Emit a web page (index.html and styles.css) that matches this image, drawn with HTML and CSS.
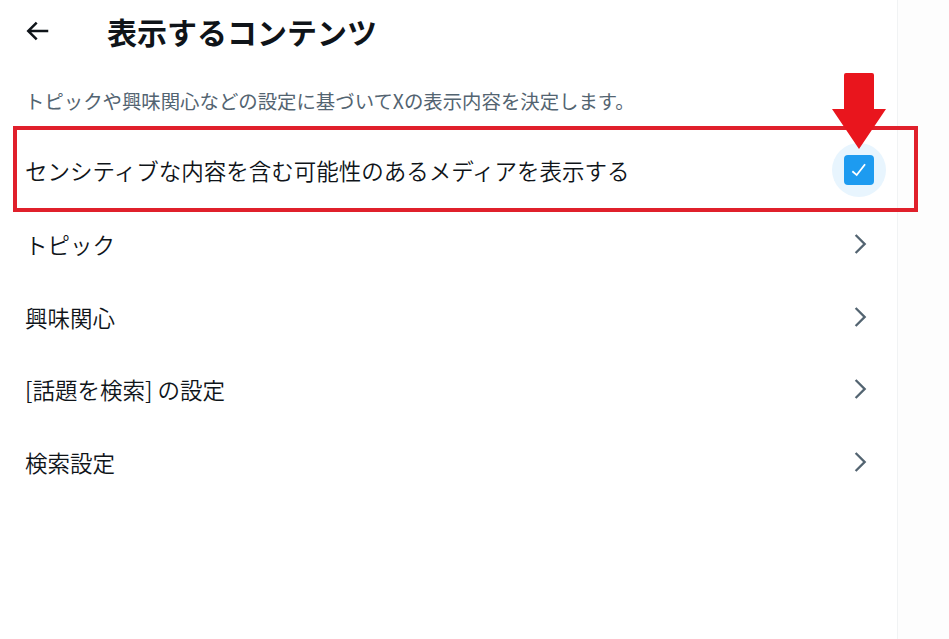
FILE: index.html
```html
<!DOCTYPE html>
<html lang="ja">
<head>
  <meta charset="UTF-8">
  <title>表示するコンテンツ</title>
  <link rel="stylesheet" href="styles.css">
</head>
<body>
  <div class="page">
    <main class="column">
      <header class="header">
        <svg class="back" viewBox="0 0 24 24"><path d="M7.414 13l5.043 5.04-1.414 1.42L3.586 12l7.457-7.46 1.414 1.42L7.414 11H21v2H7.414z"/></svg>
        <h1>表示するコンテンツ</h1>
      </header>
      <p class="desc">トピックや興味関心などの設定に基づいてXの表示内容を決定します。</p>

      <div class="row row-check">
        <span class="label">センシティブな内容を含む可能性のあるメディアを表示する</span>
        <span class="check-wrap">
          <span class="check">
            <svg viewBox="0 0 24 24"><path d="M9.64 18.952l-5.55-4.861 1.317-1.504 3.951 3.459 8.459-10.948L19.4 6.32 9.64 18.952z"/></svg>
          </span>
        </span>
        <span class="mark-box"></span>
        <svg class="mark-arrow" viewBox="0 0 54 77"><path d="M12 2 Q12 0 14 0 H40 Q42 0 42 2 V36 H54 L27 76 L0 36 H12 Z"/></svg>
      </div>

      <div class="row">
        <span class="label">トピック</span>
        <svg class="chev" viewBox="0 0 24 24"><path d="M14.586 12L7.543 4.96l1.414-1.42L17.414 12l-8.457 8.46-1.414-1.42L14.586 12z"/></svg>
      </div>
      <div class="row">
        <span class="label">興味関心</span>
        <svg class="chev" viewBox="0 0 24 24"><path d="M14.586 12L7.543 4.96l1.414-1.42L17.414 12l-8.457 8.46-1.414-1.42L14.586 12z"/></svg>
      </div>
      <div class="row">
        <span class="label">[話題を検索] の設定</span>
        <svg class="chev" viewBox="0 0 24 24"><path d="M14.586 12L7.543 4.96l1.414-1.42L17.414 12l-8.457 8.46-1.414-1.42L14.586 12z"/></svg>
      </div>
      <div class="row">
        <span class="label">検索設定</span>
        <svg class="chev" viewBox="0 0 24 24"><path d="M14.586 12L7.543 4.96l1.414-1.42L17.414 12l-8.457 8.46-1.414-1.42L14.586 12z"/></svg>
      </div>
    </main>
  </div>
</body>
</html>
```

FILE: styles.css
```css
html, body { margin: 0; padding: 0; height: 100%; }
body { font-family: "Noto Sans CJK JP", "Noto Sans", sans-serif; background: #fdfdfd; color: #0f1419; overflow: hidden; }
.page { display: flex; height: 100%; }
.column { width: 897px; background: #fff; border-right: 1px solid #f1f3f4; }

.header { height: 62px; display: flex; align-items: center; padding-left: 22px; }
.back { width: 30px; height: 30px; fill: #0f1419; flex: none; }
.header h1 { margin: 0 0 0 55px; font-size: 30px; font-weight: 700; line-height: 36px; }

.desc { margin: 0; padding: 25px 25px 17px; font-size: 19.4px; line-height: 28px; color: #536471; }

.row { height: 72.5px; display: flex; align-items: center; justify-content: space-between; padding: 0 23px 0 25px; font-size: 22.5px; font-weight: 350; position: relative; }
.row-check { height: 76px; padding-right: 11px; }
.label { white-space: nowrap; }
.chev { width: 28px; height: 28px; fill: #536471; }

.check-wrap { width: 54px; height: 54px; border-radius: 50%; background: #e8f5fe; display: flex; align-items: center; justify-content: center; }
.check { width: 30px; height: 30px; border-radius: 4px; background: #1d9bf0; display: flex; align-items: center; justify-content: center; }
.check svg { width: 22px; height: 22px; fill: #fff; }

/* annotation */
.mark-box { position: absolute; left: 13px; top: -6px; width: 897px; height: 78px; border: 4px solid #e0202b; pointer-events: none; }
.mark-arrow { position: absolute; left: 832px; top: -59px; width: 54px; height: 77px; fill: #e9151d; }
```
